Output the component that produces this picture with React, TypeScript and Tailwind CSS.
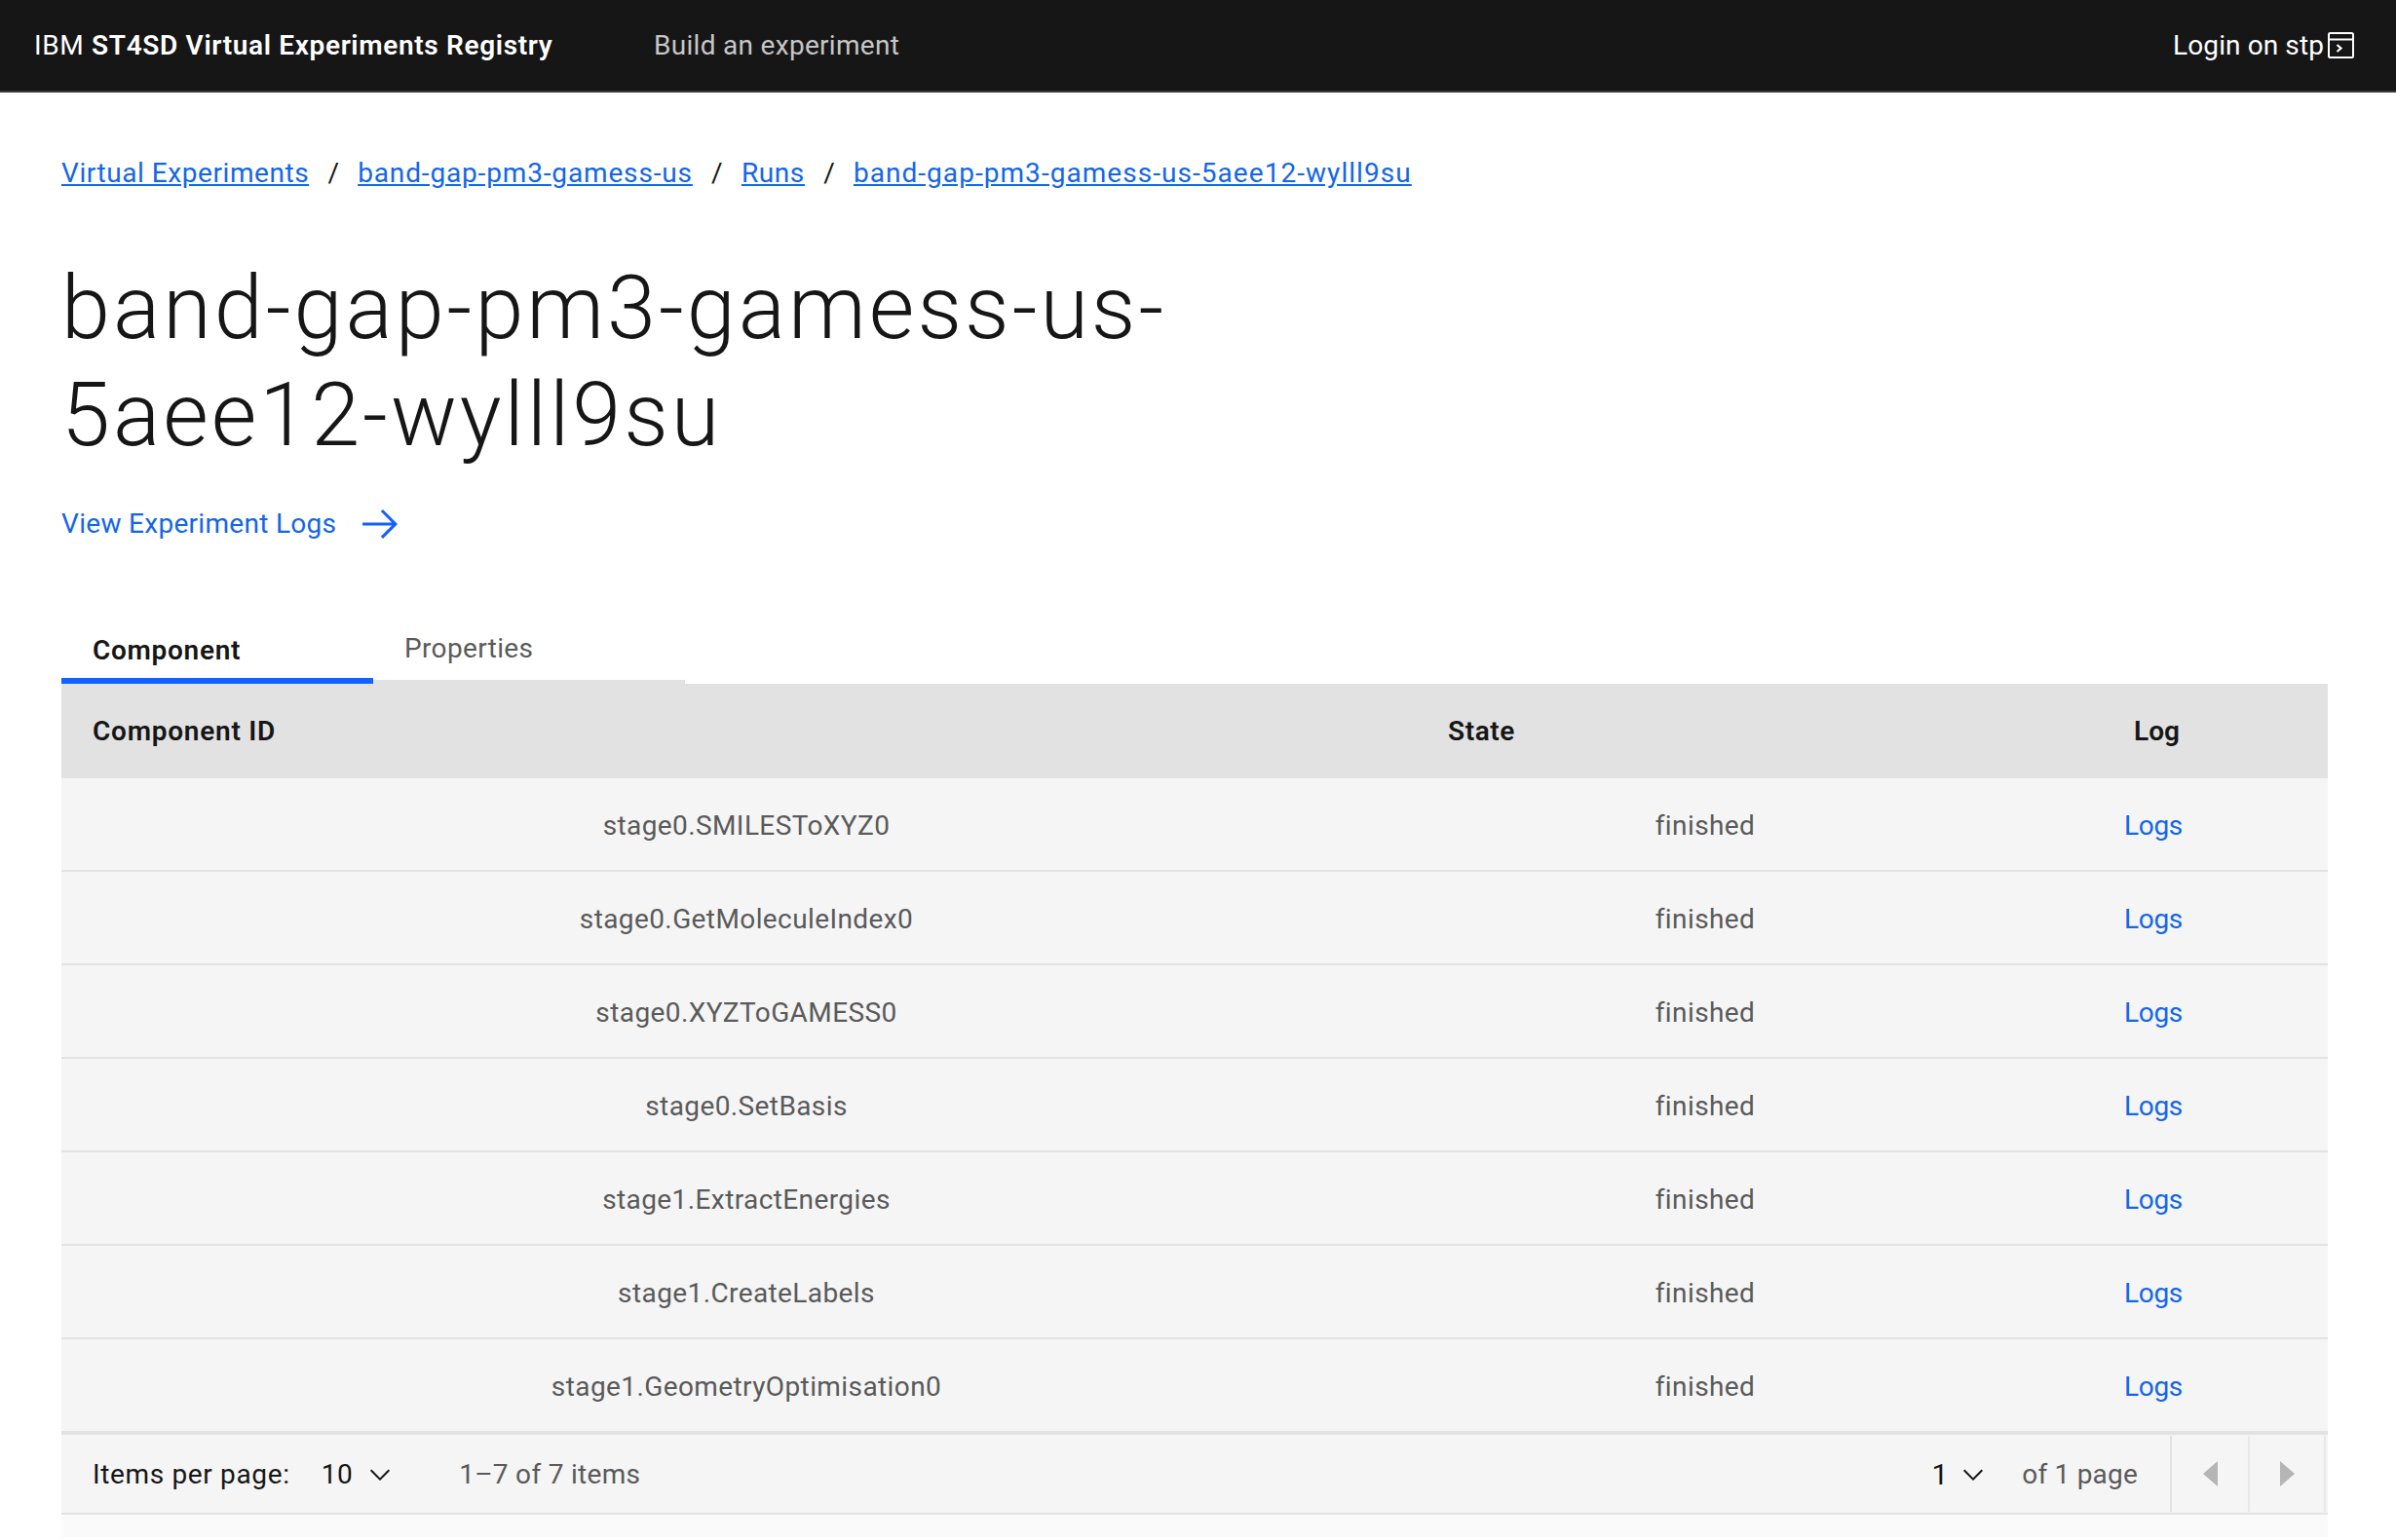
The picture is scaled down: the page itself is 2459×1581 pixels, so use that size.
import type React from "react";

const ROWS = [
    "stage0.SMILESToXYZ0",
    "stage0.GetMoleculeIndex0",
    "stage0.XYZToGAMESS0",
    "stage0.SetBasis",
    "stage1.ExtractEnergies",
    "stage1.CreateLabels",
    "stage1.GeometryOptimisation0",
];

const CRUMBS = [
    { label: "Virtual Experiments", tracking: "tracking-[0.56px]" },
    { label: "band-gap-pm3-gamess-us", tracking: "tracking-[0.85px]" },
    { label: "Runs", tracking: "tracking-[0.6px]" },
    { label: "band-gap-pm3-gamess-us-5aee12-wylll9su", tracking: "tracking-[1.05px]" },
];

const Chevron: React.FC<{ className?: string }> = ({ className }) => (
    <svg viewBox="0 0 16 16" fill="currentColor" className={className}>
        <path d="M8 11 3 6l.7-.7L8 9.6l4.3-4.3.7.7z" />
    </svg>
);

const ArrowRight = () => (
    <svg viewBox="0 0 32 32" fill="#0f62fe" className="w-12 h-12 ml-[21px]">
        <path d="M18 6 16.57 7.393 24.15 15H4v2h20.15l-7.58 7.573L18 26l10-10z" />
    </svg>
);

const TerminalIcon = () => (
    <svg viewBox="0 0 27 27" fill="none" stroke="white" strokeWidth="2" className="w-[27px] h-[27px] ml-[4px]">
        <rect x="1" y="1" width="25" height="25" rx="1.5" />
        <path d="M1 7.5h25" />
        <path d="M9.5 13l4 3.5-4 3.5" strokeWidth="2.2" />
    </svg>
);

export default function App() {
    return (
        <div className="h-[1581px] bg-white font-['Roboto',sans-serif] text-[28px] leading-[36px] text-[#161616] overflow-hidden">
            <header className="h-[95px] bg-[#161616] border-b-2 border-[#393939] flex items-center pl-[35px] pr-[43px] text-white">
                <span className="w-[636px] tracking-[0.65px]">
                    IBM <b className="font-semibold">ST4SD Virtual Experiments Registry</b>
                </span>
                <span className="text-[#c6c6c6] tracking-[0.3px]">Build an experiment</span>
                <span className="ml-auto tracking-[0.1px]">Login on stp</span>
                <TerminalIcon />
            </header>

            <main className="px-[63px] pr-[70px]">
                <nav className="flex items-center mt-[65px] h-[36px] text-[#1466e8]">
                    {CRUMBS.map((crumb, i) => (
                        <span key={crumb.label} className="flex items-center">
                            {i > 0 && <span className="text-[#161616] w-[50px] text-center">/</span>}
                            <a className={`underline ${crumb.tracking}`}>{crumb.label}</a>
                        </span>
                    ))}
                </nav>

                <h1 className="mt-[66px] w-[1200px] text-[90px] leading-[110px] font-light tracking-[3px]">
                    band-gap-pm3-gamess-us-5aee12-wylll9su
                </h1>

                <a className="flex items-center mt-[32px] h-12 text-[#1466e8] tracking-[0.3px]">
                    View Experiment Logs
                    <ArrowRight />
                </a>

                <div className="flex mt-[44px] h-[96px] w-[640px]">
                    <div className="w-[320px] flex items-end pl-[32px] pb-[10px] font-semibold tracking-[0.7px] border-b-[6px] border-[#0f62fe]">
                        Component
                    </div>
                    <div className="w-[320px] flex items-end pl-[32px] pb-[14px] text-[#5a5a5a] tracking-[0.35px] border-b-4 border-[#e2e2e2]">
                        Properties
                    </div>
                </div>

                <div className="grid grid-cols-[1391px_704px_1fr] items-center h-[97px] bg-[#e2e2e2] font-semibold">
                    <div className="pl-[32px] tracking-[0.75px]">Component ID</div>
                    <div className="pl-[32px] tracking-[0.6px]">State</div>
                    <div className="pl-[32px]">Log</div>
                </div>

                {ROWS.map((row) => (
                    <div
                        key={row}
                        className="grid grid-cols-[1406px_562px_1fr] items-center text-center h-[96px] pt-[3px] bg-[#f5f5f5] border-b-2 border-[#e2e2e2] text-[#5a5a5a] tracking-[0.4px]"
                    >
                        <div>{row}</div>
                        <div>finished</div>
                        <div className="text-[#1466e8] tracking-[-0.3px]">Logs</div>
                    </div>
                ))}

                <div className="flex items-center h-[84px] pt-[2px] bg-[#f5f5f5] border-t-2 border-b-2 border-[#e2e2e2] pl-[32px]">
                    <span className="tracking-[0.65px]">Items per page:</span>
                    <span className="ml-[32px] tracking-[0.5px]">10</span>
                    <Chevron className="w-8 h-8 ml-[12px]" />
                    <span className="ml-[65px] text-[#5a5a5a] tracking-[0.3px]">1–7 of 7 items</span>
                    <span className="ml-auto text-[30px]">1</span>
                    <Chevron className="w-8 h-8 ml-[10px]" />
                    <span className="ml-[34px] mr-[33px] text-[#5a5a5a] tracking-[0.2px]">of 1 page</span>
                    <div className="flex h-full mr-[2px] -mt-[2px]">
                        <div className="w-[80px] border-l-2 border-[#e2e2e2] flex items-center justify-center">
                            <div className="w-0 h-0 border-y-[13px] border-y-transparent border-r-[15px] border-r-[#b5b5b5]" />
                        </div>
                        <div className="w-[80px] border-x-2 border-[#e8e8e8] flex items-center justify-center">
                            <div className="w-0 h-0 border-y-[13px] border-y-transparent border-l-[15px] border-l-[#b5b5b5]" />
                        </div>
                    </div>
                </div>
                <div className="h-[23px] bg-[#fafafa]" />
            </main>
        </div>
    );
}
